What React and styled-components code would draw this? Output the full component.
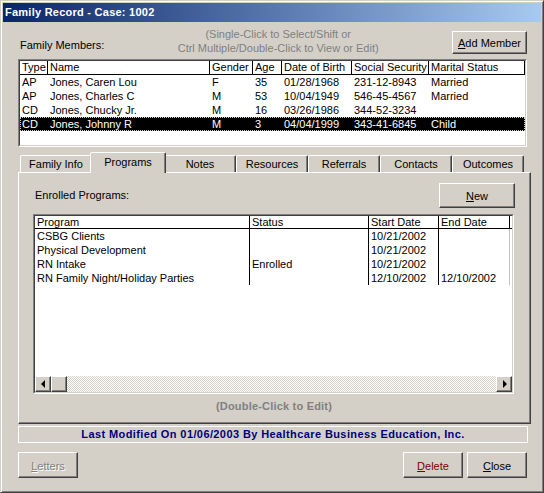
import React from 'react';
import styled, { createGlobalStyle, css } from 'styled-components';

const GlobalStyle = createGlobalStyle`
  html, body {
    margin: 0;
    padding: 0;
    background: #d4d0c8;
  }
  body {
    font-family: "Liberation Sans", Arial, sans-serif;
    font-size: 11px;
    color: #000;
  }
  * {
    box-sizing: border-box;
  }
`;

const raised = css`
  border: 1px solid;
  border-color: #fff #404040 #404040 #fff;
  box-shadow: inset -1px -1px #808080;
  background: #d4d0c8;
`;

const Window = styled.div`
    width: 544px;
    height: 493px;
    padding: 2px;
    background: #d4d0c8;
    border: 1px solid;
    border-color: #d4d0c8 #404040 #404040 #d4d0c8;
    box-shadow: inset 1px 1px #fff, inset -1px -1px #808080;
    display: flex;
    flex-direction: column;
`;

const TitleBar = styled.div`
    height: 19px;
    line-height: 19px;
    padding-left: 2px;
    color: #fff;
    font-weight: bold;
    letter-spacing: 0.25px;
    background: linear-gradient(to right, #0a246a, #a6caf0);
`;

const Content = styled.div`
    padding: 0 10px 0 15px;
    display: flex;
    flex-direction: column;
`;

const TopRow = styled.div`
    margin-top: 5px;
    width: 509px;
    height: 32px;
    display: flex;
`;

const FieldLabel = styled.div`
    align-self: ${p => (p.$bottom ? 'flex-end' : 'center')};
    margin-bottom: ${p => (p.$bottom ? '7px' : '0')};
    padding-left: 2px;
    line-height: 13px;
    white-space: nowrap;
`;

const Hint = styled.div`
    flex: 1;
    text-align: center;
    line-height: 14px;
    color: #808080;
`;

const Button = styled.button`
    ${raised};
    width: ${p => p.$w}px;
    height: ${p => p.$h}px;
    margin-top: ${p => p.$top || 0}px;
    padding: 1px 0 0;
    font-family: inherit;
    font-size: 11px;
    color: ${p => (p.$danger ? '#800000' : p.disabled ? '#808080' : '#000')};
    text-shadow: ${p => (p.disabled ? '1px 1px #fff' : 'none')};
    cursor: default;
    flex-shrink: 0;
`;

const Frame = styled.div`
    width: ${p => p.$w}px;
    height: ${p => p.$h}px;
    margin-top: ${p => p.$top || 0}px;
    border: 1px solid;
    border-color: #808080 #fff #fff #808080;
    flex-shrink: 0;
`;

const ListBody = styled.div`
    height: 100%;
    background: #fff;
    border: 1px solid;
    border-color: #404040 #d4d0c8 #d4d0c8 #404040;
    display: flex;
    flex-direction: column;
    overflow: hidden;
`;

const HeaderRow = styled.div`
    display: grid;
    grid-template-columns: ${p => p.$cols};
    height: ${p => p.$h}px;
    border-bottom: 1px solid #000;
    background: #fff;
`;

const HeaderCell = styled.div`
    padding-left: 2px;
    border-right: 1px solid #000;
    line-height: ${p => p.$h - 1}px;
    white-space: nowrap;
    overflow: hidden;
`;

const Row = styled.div`
    display: grid;
    grid-template-columns: ${p => p.$cols};
    height: 14px;
    line-height: 14px;
    background: ${p => (p.$selected ? '#000' : '#fff')};
    color: ${p => (p.$selected ? '#fff' : '#000')};
    outline: ${p => (p.$selected ? '1px dotted #d4d0c8' : 'none')};
    outline-offset: -1px;
`;

const Cell = styled.div`
    padding-left: 2px;
    white-space: nowrap;
    overflow: hidden;
    border-right: ${p => (p.$line ? `1px solid ${p.$line}` : 'none')};
`;

const Rows = styled.div`
    flex: 1;
`;

const TabStrip = styled.div`
    margin-top: 5px;
    margin-bottom: -1px;
    height: 21px;
    padding-left: 2px;
    display: flex;
    align-items: flex-end;
    position: relative;
    z-index: 1;
`;

const Tab = styled.div`
    width: ${p => (p.$active ? 76 : 72)}px;
    height: ${p => (p.$active ? 21 : 17)}px;
    margin: ${p => (p.$active ? '0 -2px' : '0 0 1px')};
    padding-top: ${p => (p.$active ? 3 : 2)}px;
    line-height: 13px;
    text-align: center;
    background: #d4d0c8;
    border: 1px solid;
    border-bottom: none;
    border-color: #fff #404040 transparent #fff;
    border-radius: 2px 2px 0 0;
    box-shadow: inset -1px 0 #808080;
    position: relative;
    z-index: ${p => (p.$active ? 2 : 1)};
`;

const Panel = styled.div`
    height: 252px;
    width: 513px;
    padding: 10px 15px 0 14px;
    border: 1px solid;
    border-color: #fff #404040 #404040 #fff;
    box-shadow: inset -1px -1px #808080;
    display: flex;
    flex-direction: column;
`;

const PanelHeader = styled.div`
    height: 25px;
    display: flex;
    align-items: center;
    justify-content: space-between;
`;

const Scrollbar = styled.div`
    height: 16px;
    display: flex;
    background-color: #fff;
    background-image: repeating-conic-gradient(#d4d0c8 0 25%, #fff 0 50%);
    background-size: 2px 2px;
`;

const ScrollButton = styled.div`
    ${raised};
    width: 16px;
    height: 16px;
    display: flex;
    align-items: center;
    justify-content: center;
`;

const Arrow = styled.span`
    width: 0;
    height: 0;
    border-top: 4px solid transparent;
    border-bottom: 4px solid transparent;
    ${p => (p.$dir === 'left'
        ? 'border-right: 4px solid #000; margin-left: -1px;'
        : 'border-left: 4px solid #000; margin-left: 1px;')}
`;

const Track = styled.div`
    flex: 1;
`;

const EditHint = styled.div`
    margin-top: 6px;
    line-height: 13px;
    text-align: center;
    font-weight: bold;
    letter-spacing: 0.2px;
    color: #808080;
`;

const StatusBox = styled.div`
    margin-top: 2px;
    width: 510px;
    height: 17px;
    border: 1px solid #fff;
    line-height: 15px;
    text-align: center;
    font-weight: bold;
    letter-spacing: 0.4px;
    color: #000080;
`;

const BottomRow = styled.div`
    margin-top: 9px;
    width: 509px;
    height: 26px;
    display: flex;
    gap: 4px;
`;

const Spacer = styled.div`
    flex: 1;
`;

const memberCols = '28px 162px 43px 29px 70px 77px 1fr';
const memberHeads = ['Type', 'Name', 'Gender', 'Age', 'Date of Birth', 'Social Security', 'Marital Status'];
const members = [
    ['AP', 'Jones, Caren Lou', 'F', '35', '01/28/1968', '231-12-8943', 'Married'],
    ['AP', 'Jones, Charles C', 'M', '53', '10/04/1949', '546-45-4567', 'Married'],
    ['CD', 'Jones, Chucky Jr.', 'M', '16', '03/26/1986', '344-52-3234', ''],
    ['CD', 'Jones, Johnny R', 'M', '3', '04/04/1999', '343-41-6845', 'Child'],
];

const programCols = '215px 119px 70px 71px 1fr';
const programHeads = ['Program', 'Status', 'Start Date', 'End Date'];
const programs = [
    ['CSBG Clients', '', '10/21/2002', ''],
    ['Physical Development', '', '10/21/2002', ''],
    ['RN Intake', 'Enrolled', '10/21/2002', ''],
    ['RN Family Night/Holiday Parties', '', '12/10/2002', '12/10/2002'],
];

const tabs = ['Family Info', 'Programs', 'Notes', 'Resources', 'Referrals', 'Contacts', 'Outcomes'];

const App = () => {
    return (
        <>
            <GlobalStyle />
            <Window>
                <TitleBar>Family Record - Case: 1002</TitleBar>
                <Content>
                    <TopRow>
                        <FieldLabel $bottom>Family Members:</FieldLabel>
                        <Hint>
                            (Single-Click to Select/Shift or<br />
                            Ctrl Multiple/Double-Click to View or Edit)
                        </Hint>
                        <Button $w={75} $h={23} $top={4}><u>A</u>dd Member</Button>
                    </TopRow>

                    <Frame $w={509} $h={88}>
                        <ListBody>
                            <HeaderRow $cols={memberCols} $h={14}>
                                {memberHeads.map(h => (
                                    <HeaderCell key={h} $h={14}>{h}</HeaderCell>
                                ))}
                            </HeaderRow>
                            <Rows>
                                {members.map((m, i) => (
                                    <Row key={i} $cols={memberCols} $selected={i === 3}>
                                        {m.map((v, j) => <Cell key={j}>{v}</Cell>)}
                                    </Row>
                                ))}
                            </Rows>
                        </ListBody>
                    </Frame>

                    <TabStrip>
                        {tabs.map(t => (
                            <Tab key={t} $active={t === 'Programs'}>{t}</Tab>
                        ))}
                    </TabStrip>
                    <Panel>
                        <PanelHeader>
                            <FieldLabel>Enrolled Programs:</FieldLabel>
                            <Button $w={76} $h={25}><u>N</u>ew</Button>
                        </PanelHeader>
                        <Frame $w={481} $h={180} $top={6}>
                            <ListBody>
                                <HeaderRow $cols={programCols} $h={13}>
                                    {programHeads.map(h => (
                                        <HeaderCell key={h} $h={13}>{h}</HeaderCell>
                                    ))}
                                    <div />
                                </HeaderRow>
                                <Rows>
                                    {programs.map((p, i) => (
                                        <Row key={i} $cols={programCols}>
                                            {p.map((v, j) => (
                                                <Cell key={j} $line={j < 3 ? '#000' : '#c0c0c0'}>{v}</Cell>
                                            ))}
                                            <div />
                                        </Row>
                                    ))}
                                </Rows>
                                <Scrollbar>
                                    <ScrollButton><Arrow $dir="left" /></ScrollButton>
                                    <ScrollButton />
                                    <Track />
                                    <ScrollButton><Arrow $dir="right" /></ScrollButton>
                                </Scrollbar>
                            </ListBody>
                        </Frame>
                        <EditHint>(Double-Click to Edit)</EditHint>
                    </Panel>

                    <StatusBox>Last Modified On 01/06/2003 By Healthcare Business Education, Inc.</StatusBox>

                    <BottomRow>
                        <Button $w={60} $h={26} disabled><u>L</u>etters</Button>
                        <Spacer />
                        <Button $w={60} $h={26} $danger><u>D</u>elete</Button>
                        <Button $w={60} $h={26}><u>C</u>lose</Button>
                    </BottomRow>
                </Content>
            </Window>
        </>
    );
};

export default App;
